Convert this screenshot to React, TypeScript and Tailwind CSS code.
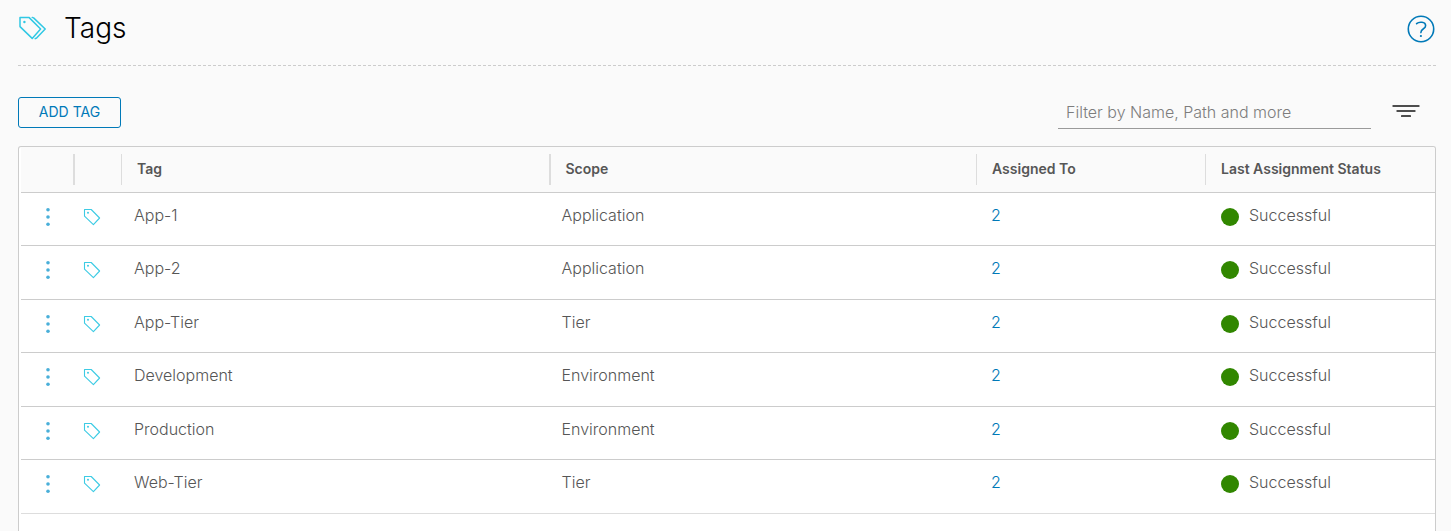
interface TagRow {
  tag: string;
  scope: string;
  assigned: number;
  status: string;
}

const rows: TagRow[] = [
  { tag: "App-1", scope: "Application", assigned: 2, status: "Successful" },
  { tag: "App-2", scope: "Application", assigned: 2, status: "Successful" },
  { tag: "App-Tier", scope: "Tier", assigned: 2, status: "Successful" },
  { tag: "Development", scope: "Environment", assigned: 2, status: "Successful" },
  { tag: "Production", scope: "Environment", assigned: 2, status: "Successful" },
  { tag: "Web-Tier", scope: "Tier", assigned: 2, status: "Successful" },
];

function TagsIcon() {
  return (
    <svg viewBox="0 0 28 24" className="h-6 w-7" fill="none" stroke="#30c8e4" strokeWidth="1.5" strokeLinejoin="round" aria-hidden="true">
      <path d="M2 1.6H11.2L22.6 13L14.2 22.4L2 10.6Z" />
      <path d="M14.2 1.4L15.6 1.9L27.2 13L18.6 22L17.2 22.6" strokeLinecap="round" />
      <circle cx="6.4" cy="6" r="1.2" fill="#30c8e4" stroke="none" />
    </svg>
  );
}

function TagIcon() {
  return (
    <svg viewBox="0 0 18 18" className="h-[18px] w-[18px]" fill="none" stroke="#3ccbe4" strokeWidth="1.1" strokeLinejoin="round" aria-hidden="true">
      <path d="M1.5 1.5H8.2L16.6 10L10.4 16.6L1.5 8.2Z" />
      <circle cx="5" cy="4.8" r="1" fill="#3ccbe4" stroke="none" />
    </svg>
  );
}

function HelpIcon() {
  return (
    <svg viewBox="0 0 28 28" className="h-7 w-7" fill="none" stroke="#0079b8" strokeWidth="1.6" aria-hidden="true">
      <circle cx="14" cy="14" r="12.7" />
      <path d="M9.6 8.7C11.8 6.6 18.6 6.4 18.6 10.8C18.6 14.2 13.9 13.4 13.9 17.6" strokeLinecap="round" />
      <circle cx="13.9" cy="21" r="1.1" fill="#0079b8" stroke="none" />
    </svg>
  );
}

function FilterIcon() {
  return (
    <svg viewBox="0 0 28 14" className="h-3.5 w-7" fill="#4d4d4d" aria-hidden="true">
      <rect x="0.5" y="1" width="27" height="2" rx="0.6" />
      <rect x="4.5" y="6" width="19" height="2" rx="0.6" />
      <rect x="9" y="11" width="10" height="2" rx="0.6" />
    </svg>
  );
}

function MenuDots() {
  return (
    <svg viewBox="0 0 4 20" className="h-5 w-1" fill="#49afd9" aria-hidden="true">
      <circle cx="2" cy="2.7" r="1.8" />
      <circle cx="2" cy="10" r="1.8" />
      <circle cx="2" cy="17.3" r="1.8" />
    </svg>
  );
}

function HeaderCell({ label, wide = false }: { label: string; wide?: boolean }) {
  return (
    <th scope="col" className="border-b border-[#ccc] p-0 text-left text-sm font-semibold">
      <div className={`flex h-[31px] items-center border-[#ddd] pb-0.5 pl-[15px] ${wide ? "border-l-2" : "border-l"}`}>
        {label}
      </div>
    </th>
  );
}

export default function App() {
  return (
    <main className="flex h-screen flex-col overflow-hidden bg-[#fafafa] pl-[18px] pr-[15px] font-['Inter',sans-serif] text-base font-light text-[#565656]">
      <header className="flex h-[66px] shrink-0 items-start justify-between border-b border-dashed border-[#ccc] pt-2">
        <div className="flex items-center gap-[18px]">
          <TagsIcon />
          <h1 className="text-[28px] leading-10 text-black">Tags</h1>
        </div>
        <a href="#help" aria-label="Help" className="pr-px pt-[7px]">
          <HelpIcon />
        </a>
      </header>

      <div className="flex h-20 shrink-0 items-start justify-between pt-[31px]">
        <button type="button" className="h-[31px] min-w-[103px] rounded-[3px] border border-[#0079b8] px-4 pb-0.5 text-sm font-normal text-[#0079b8]">
          ADD TAG
        </button>
        <div className="flex items-center gap-[21px] pr-4">
          <input
            type="text"
            aria-label="Filter by Name, Path and more"
            placeholder="Filter by Name, Path and more"
            className="h-8 w-[313px] border-b border-[#9a9a9a] bg-transparent px-2 pb-0.5 outline-none placeholder:text-[#7d7d7d]"
          />
          <button type="button" aria-label="Filter options" className="pb-1">
            <FilterIcon />
          </button>
        </div>
      </div>

      <section className="min-h-0 flex-1 overflow-hidden rounded-t-[3px] border border-b-0 border-[#ccc] bg-white pl-0.5">
        <table className="w-full table-fixed border-separate border-spacing-0">
          <colgroup>
            <col className="w-[52px]" />
            <col className="w-12" />
            <col />
            <col />
            <col className="w-[229px]" />
            <col className="w-[230px]" />
          </colgroup>
          <thead className="bg-[#fafafa]">
            <tr className="h-[46px]">
              <th className="border-b border-[#ccc] p-0" aria-label="Actions" />
              <th className="border-b border-[#ccc] p-0" aria-label="Type">
                <div className="h-[31px] border-l-2 border-[#ddd]" />
              </th>
              <HeaderCell label="Tag" />
              <HeaderCell label="Scope" wide />
              <HeaderCell label="Assigned To" />
              <HeaderCell label="Last Assignment Status" />
            </tr>
          </thead>
          <tbody className="align-top">
            {rows.map((row) => (
              <tr
                key={row.tag}
                className="odd:h-[53px] even:h-[54px] [&>td]:border-b [&>td]:border-[#ccc] last:[&>td]:border-[#ddd]"
              >
                <td className="pl-[25px] pt-3.5">
                  <button type="button" aria-label={`Actions for ${row.tag}`} className="block">
                    <MenuDots />
                  </button>
                </td>
                <td className="pl-2.5 pt-[15px]">
                  <TagIcon />
                </td>
                <td className="pl-[13px] pt-2.5">{row.tag}</td>
                <td className="pl-[13px] pt-2.5">{row.scope}</td>
                <td className="pl-[15px] pt-2.5">
                  <a href="#assignments" className="text-[#0079b8]">
                    {row.assigned}
                  </a>
                </td>
                <td className="pl-4 pt-2.5">
                  <div className="flex items-center gap-2.5">
                    <span className="mt-1 size-[18px] rounded-full bg-[#318700]" />
                    {row.status}
                  </div>
                </td>
              </tr>
            ))}
          </tbody>
        </table>
      </section>
    </main>
  );
}
